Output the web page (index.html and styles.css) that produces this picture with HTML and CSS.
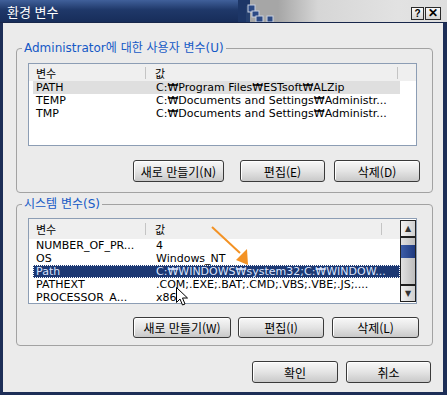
FILE: index.html
```html
<!DOCTYPE html>
<html lang="ko">
<head>
    <meta charset="UTF-8">
    <title>환경 변수</title>
    <link rel="stylesheet" href="styles.css">
</head>
<body>
<div class="window">
    <div class="titlebar">
        <div class="title-dark"><span class="title">환경 변수</span></div>
        <svg class="title-steps" width="40" height="22" viewBox="0 0 40 22">
            <rect x="0" y="0" width="40" height="22" fill="#a6a6a6"/>
            <rect x="0" y="0" width="8" height="22" fill="#1d3667"/>
            <rect x="8" y="0" width="4" height="6" fill="#1d3667"/>
            <rect x="8" y="6" width="4" height="16" fill="#26406f"/>
            <rect x="10" y="5" width="7" height="7" fill="#2c4a85" stroke="#c8d0e0" stroke-width="1"/>
            <rect x="14" y="11" width="7" height="6" fill="#2c4a85" stroke="#c8d0e0" stroke-width="1"/>
            <rect x="18" y="16" width="7" height="6" fill="#2c4a85" stroke="#c8d0e0" stroke-width="1"/>
            <rect x="29" y="16" width="6" height="6" fill="#2c4a85" stroke="#c8d0e0" stroke-width="1"/>
        </svg>
        <div class="title-light">
            <span class="tb-btn help">?</span>
            <span class="tb-btn close">✕</span>
        </div>
    </div>

    <div class="client">
        <fieldset class="group user">
            <legend>Administrator에 대한 사용자 변수(U)</legend>
            <div class="list">
                <div class="list-body">
                    <div class="list-head">
                        <span class="head-name">변수</span>
                        <span class="head-value">값</span>
                    </div>
                    <div class="row selected-off"><span class="col-name">PATH</span><span class="col-value">C:₩Program Files₩ESTsoft₩ALZip</span></div>
                    <div class="row"><span class="col-name">TEMP</span><span class="col-value">C:₩Documents and Settings₩Administr...</span></div>
                    <div class="row"><span class="col-name">TMP</span><span class="col-value">C:₩Documents and Settings₩Administr...</span></div>
                </div>
            </div>
            <div class="btn-row">
                <button class="button btn-new">새로 만들기(N)</button>
                <button class="button btn-edit">편집(E)</button>
                <button class="button btn-del">삭제(D)</button>
            </div>
        </fieldset>

        <fieldset class="group system">
            <legend>시스템 변수(S)</legend>
            <div class="list tall">
                <div class="list-body">
                    <div class="list-head">
                        <span class="head-name">변수</span>
                        <span class="head-value">값</span>
                    </div>
                    <div class="row"><span class="col-name">NUMBER_OF_PR...</span><span class="col-value">4</span></div>
                    <div class="row"><span class="col-name">OS</span><span class="col-value">Windows_NT</span></div>
                    <div class="row selected"><span class="col-name">Path</span><span class="col-value">C:₩WINDOWS₩system32;C:₩WINDOW...</span></div>
                    <div class="row"><span class="col-name">PATHEXT</span><span class="col-value">.COM;.EXE;.BAT;.CMD;.VBS;.VBE;.JS;....</span></div>
                    <div class="row"><span class="col-name">PROCESSOR_A...</span><span class="col-value">x86</span></div>
                </div>
                <div class="scrollbar">
                    <div class="sb-btn">▲</div>
                    <div class="sb-track"><div class="sb-thumb"></div></div>
                    <div class="sb-btn">▼</div>
                </div>
            </div>
            <div class="btn-row">
                <button class="button btn-new">새로 만들기(W)</button>
                <button class="button btn-edit">편집(I)</button>
                <button class="button btn-del">삭제(L)</button>
            </div>
        </fieldset>

        <div class="dialog-buttons">
            <button class="button btn-ok">확인</button>
            <button class="button btn-cancel">취소</button>
        </div>
    </div>

    <!-- annotation drawn over the screenshot -->
    <svg class="arrow" width="60" height="50" viewBox="0 0 60 50">
        <line x1="2" y1="2" x2="30" y2="28" stroke="#f39224" stroke-width="2"/>
        <polygon points="26,35 37,24 38,40" fill="#f39224"/>
    </svg>
    <svg class="cursor" width="13" height="20" viewBox="0 0 13 20">
        <path d="M0.5 0.5 L0.5 15.5 L4 12 L6.5 18 L9 17 L6.5 11 L11.5 11 Z" fill="#fff" stroke="#000" stroke-width="1"/>
    </svg>
</div>
</body>
</html>
```

FILE: styles.css
```css
html, body {
    margin: 0;
    padding: 0;
}
body {
    width: 447px;
    height: 395px;
    overflow: hidden;
    font-family: "DejaVu Sans", "Noto Sans CJK KR", sans-serif;
    font-size: 12px;
    color: #000;
}
.window {
    position: relative;
    width: 447px;
    height: 395px;
    background: #1d2e57;
    display: flex;
    flex-direction: column;
}

/* title bar */
.titlebar {
    height: 22px;
    display: flex;
    border-bottom: 1px solid #17264a;
}
.title-dark {
    width: 238px;
    background: linear-gradient(#40609a, #1f3869 45%, #172d5a);
    display: flex;
    align-items: center;
}
.title {
    color: #fff;
    font-family: "Noto Sans CJK KR", sans-serif;
    font-size: 13px;
    margin-left: 7px;
}
.title-steps {
    display: block;
}
.title-light {
    flex: 1;
    background: linear-gradient(to right, #a6a6a6, #d6d6d6 40px, #e2e2e2 120px, #dedede);
    display: flex;
    justify-content: flex-end;
    align-items: flex-start;
    padding: 7px 6px 0 0;
    gap: 1px;
}
.tb-btn {
    height: 11px;
    border: 1px solid #2a2a2a;
    background: linear-gradient(#fafafa, #d4d4d4);
    font-family: "Liberation Sans", sans-serif;
    font-weight: bold;
    line-height: 11px;
    text-align: center;
    font-size: 10px;
}
.help {
    width: 11px;
}
.close {
    width: 14px;
    font-size: 12px;
}

/* client area */
.client {
    flex: 1;
    margin: 0 4px 3px 3px;
    background: #ebebeb;
    padding: 18px 10px 0 13px;
}
.group {
    margin: 0;
    border: 1px solid #a2a2a2;
    border-radius: 4px;
    padding: 8px 15px 10px 11px;
    min-width: 0;
}
.group legend {
    color: #1559c6;
    font-family: "DejaVu Sans", "Noto Sans CJK KR", sans-serif;
    font-size: 12px;
    line-height: 14px;
    padding: 0 2px;
    margin-left: -6px;
}
.system {
    margin-top: 4px;
    padding-top: 7px;
    padding-bottom: 7px;
}

/* list view */
.list {
    height: 81px;
    border: 1px solid #8c9db4;
    background: #fff;
    display: flex;
    overflow: hidden;
}
.list.tall {
    height: 84px;
}
.list-body {
    flex: 1;
    font-size: 11px;
}
.list-head {
    height: 17px;
    background: #efefef;
    display: flex;
    align-items: center;
    padding-left: 4px;
    font-family: "Noto Sans CJK KR", sans-serif;
}
.tall .list-head {
    height: 20px;
}
.head-name {
    width: 109px;
    padding-left: 3px;
    border-right: 1px solid #c4c4c4;
    height: 12px;
    line-height: 12px;
}
.head-value {
    flex: 1;
    padding-left: 9px;
    border-right: 1px solid #c4c4c4;
    height: 12px;
    line-height: 12px;
    margin-right: 18px;
}
.row {
    height: 13px;
    line-height: 13px;
    display: flex;
    margin-left: 4px;
    width: 367px;
    white-space: nowrap;
}
.col-name {
    width: 117px;
    padding-left: 3px;
}
.col-value {
    padding-left: 3px;
}
.selected-off {
    background: #dfdfdf;
}
.selected {
    background: #1c3873;
    color: #d9e4ff;
    outline: 1px dotted #fff;
    outline-offset: -1px;
}

/* scrollbar */
.scrollbar {
    width: 15px;
    margin: 1px 0;
    border: 1px solid #202020;
    background: #d8d8d8;
    display: flex;
    flex-direction: column;
}
.sb-btn {
    height: 15px;
    font-size: 8px;
    line-height: 15px;
    text-align: center;
    color: #333;
    background: linear-gradient(to right, #f2f2f2, #cfcfcf);
}
.sb-track {
    flex: 1;
    border-top: 2px solid #202020;
    border-bottom: 2px solid #202020;
    background: linear-gradient(to right, #e2e2e2, #bdbdbd);
    padding-top: 7px;
}
.sb-thumb {
    height: 13px;
    background: linear-gradient(to right, #3c5da8, #1e3a80);
}

/* buttons */
.btn-row {
    display: flex;
    justify-content: flex-end;
    margin-top: 14px;
    margin-right: -3px;
}
.system .btn-row {
    margin-top: 13px;
    margin-right: -2px;
}
.button {
    height: 22px;
    padding: 0;
    margin: 0;
    border: 1px solid #3a3a3a;
    border-radius: 3px;
    background: linear-gradient(#f8f8f8, #e4e4e4 50%, #c9c9c9);
    box-shadow: inset 1px 1px 0 #fff;
    font-family: "Noto Sans CJK KR", "Liberation Sans", sans-serif;
    font-size: 12px;
    color: #000;
}
.user .btn-new { width: 91px; margin-right: 16px; }
.user .btn-edit { width: 85px; margin-right: 9px; }
.user .btn-del { width: 86px; }
.system .button { height: 21px; }
.system .btn-new { width: 98px; margin-right: 7px; }
.system .btn-edit { width: 86px; margin-right: 8px; }
.system .btn-del { width: 87px; }

.dialog-buttons {
    display: flex;
    justify-content: flex-end;
    gap: 8px;
    margin-top: 15px;
    margin-right: 2px;
}
.btn-ok { width: 86px; }
.btn-cancel { width: 85px; }

/* overlays */
.arrow {
    position: absolute;
    left: 210px;
    top: 225px;
}
.cursor {
    position: absolute;
    left: 176px;
    top: 287px;
}
```
